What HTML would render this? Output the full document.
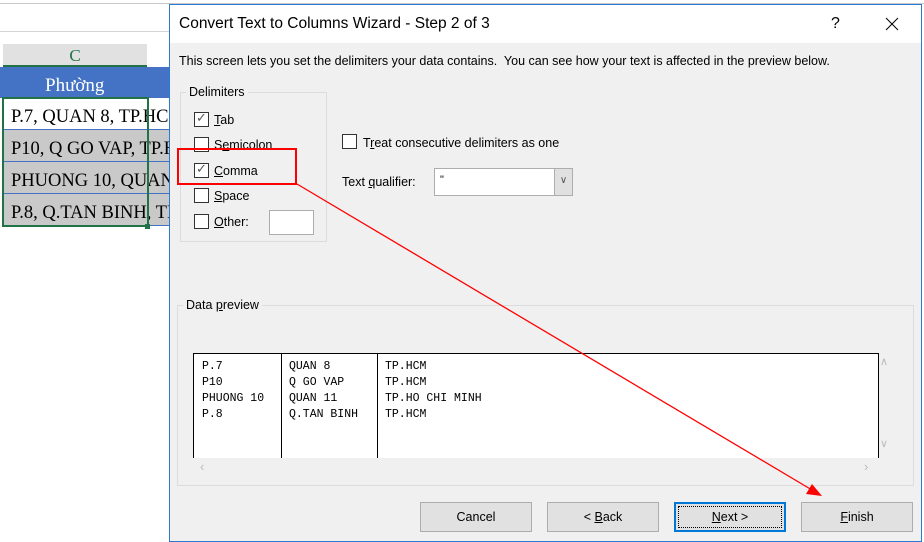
<!DOCTYPE html>
<html><head><style>
*{margin:0;padding:0;box-sizing:border-box}
body{width:924px;height:542px;position:relative;background:#fff;overflow:hidden;font-family:"Liberation Sans",sans-serif}
.a{position:absolute}
.ui{font-size:12.5px;color:#000}
.cell{position:absolute;left:2px;width:168px;height:32px;font-family:"Liberation Serif",serif;font-size:18.5px;padding:9px 0 0 9px;border-bottom:1px solid #4472c4;white-space:nowrap;overflow:hidden}
.cb{position:absolute;width:15px;height:15px;border:1px solid #333;background:#fff}
.btn{position:absolute;top:502px;width:112px;height:30px;background:#e1e1e1;border:1px solid #adadad;font-size:12.5px;text-align:center;line-height:28px}
pre{font-family:"Liberation Mono",monospace;font-size:11.5px;line-height:16px}
</style></head><body>
<div class="a" style="left:0;top:3px;width:924px;height:1px;background:#c8c8c8"></div>
<div class="a" style="left:0;top:31px;width:170px;height:1px;background:#d4d4d4"></div>
<div class="a" style="left:3px;top:44px;width:144px;height:23px;background:#e1e1e1;border-bottom:2px solid #217346;color:#217346;font-family:'Liberation Serif',serif;font-size:17px;text-align:center;line-height:24px">C</div>
<div class="a" style="left:0;top:67px;width:170px;height:31px;background:#4472c4;color:#fff;font-family:'Liberation Serif',serif;font-size:19px;padding:8px 0 0 45px">Phường</div>
<div class="cell" style="top:98px;background:#fff">P.7, QUAN 8, TP.HCM</div>
<div class="cell" style="top:130px;background:#c9c9c9">P10, Q GO VAP, TP.HCM</div>
<div class="cell" style="top:162px;background:#c9c9c9">PHUONG 10, QUAN 11</div>
<div class="cell" style="top:194px;background:#c9c9c9">P.8, Q.TAN BINH, TP</div>
<div class="a" style="left:2px;top:97px;width:147px;height:130px;border:2px solid #217346"></div>
<div class="a" style="left:145px;top:224px;width:5px;height:5px;background:#217346"></div>

<div class="a" style="left:169px;top:4px;width:753px;height:538px;background:#f0f0f0;border:1px solid #2b79d0">
 <div class="a" style="left:0;top:0;width:751px;height:38px;background:#fff"></div>
 <div class="a" style="left:9px;top:10px;font-size:15.5px">Convert Text to Columns Wizard - Step 2 of 3</div>
 <div class="a" style="left:661px;top:10px;font-size:16px">?</div>
 <svg class="a" style="left:715px;top:12px" width="14" height="14"><path d="M1 1L13 13M13 1L1 13" stroke="#000" stroke-width="1"/></svg>
 <div class="a ui" style="left:9px;top:49px">This screen lets you set the delimiters your data contains.&nbsp; You can see how your text is affected in the preview below.</div>
 <div class="a" style="left:10px;top:87px;width:147px;height:150px;border:1px solid #dcdcdc"></div>
 <div class="a ui" style="left:16px;top:80px;background:#f0f0f0;padding:0 3px">Delimiters</div>
 <div class="cb" style="left:24px;top:107px"><span style="position:absolute;left:1px;top:-3px;font-size:13px;color:#555">✓</span></div><div class="a ui" style="left:44px;top:108px"><u>T</u>ab</div>
 <div class="cb" style="left:24px;top:132px"></div><div class="a ui" style="left:44px;top:133px">S<u>e</u>micolon</div>
 <div class="cb" style="left:24px;top:158px"><span style="position:absolute;left:1px;top:-3px;font-size:13px;color:#555">✓</span></div><div class="a ui" style="left:44px;top:159px"><u>C</u>omma</div>
 <div class="cb" style="left:24px;top:183px"></div><div class="a ui" style="left:44px;top:184px"><u>S</u>pace</div>
 <div class="cb" style="left:24px;top:209px"></div><div class="a ui" style="left:44px;top:210px"><u>O</u>ther:</div>
 <div class="a" style="left:99px;top:205px;width:45px;height:25px;background:#fff;border:1px solid #adadad"></div>
 <div class="cb" style="left:172px;top:129px"></div><div class="a ui" style="left:193px;top:131px">T<u>r</u>eat consecutive delimiters as one</div>
 <div class="a ui" style="left:172px;top:170px">Text <u>q</u>ualifier:</div>
 <div class="a" style="left:264px;top:163px;width:139px;height:28px;background:#fff;border:1px solid #adadad"><span style="position:absolute;left:5px;top:5px;font-size:11px">"</span><div style="position:absolute;right:0;top:0;width:18px;height:26px;background:#e0e0e0;border-left:1px solid #adadad;font-size:10px;color:#555;text-align:center;line-height:24px">&#8744;</div></div>
 <div class="a" style="left:7px;top:300px;width:737px;height:181px;border:1px solid #dcdcdc"></div>
 <div class="a ui" style="left:13px;top:293px;background:#f0f0f0;padding:0 3px">Data <u>p</u>review</div>
 <div class="a" style="left:23px;top:348px;width:686px;height:105px;background:#fff;border-top:1px solid #000;border-left:1px solid #000;border-right:1px solid #000"></div>
 <div class="a" style="left:111px;top:348px;width:1px;height:105px;background:#000"></div>
 <div class="a" style="left:207px;top:348px;width:1px;height:105px;background:#000"></div>
 <pre class="a" style="left:32px;top:354px">P.7
P10
PHUONG 10
P.8</pre>
 <pre class="a" style="left:119px;top:354px">QUAN 8
Q GO VAP
QUAN 11
Q.TAN BINH</pre>
 <pre class="a" style="left:215px;top:354px">TP.HCM
TP.HCM
TP.HO CHI MINH
TP.HCM</pre>
 <div class="a" style="left:710px;top:350px;font-size:11px;color:#bbb">&#8743;</div>
 <div class="a" style="left:710px;top:432px;font-size:11px;color:#bbb">&#8744;</div>
 <div class="a" style="left:30px;top:454px;font-size:13px;color:#bbb">‹</div>
 <div class="a" style="left:694px;top:454px;font-size:13px;color:#bbb">›</div>
</div>
<div class="btn" style="left:420px">Cancel</div>
<div class="btn" style="left:547px">&lt; <u>B</u>ack</div>
<div class="btn" style="left:674px;border:2px solid #0078d7;line-height:26px"><span style="display:block;margin:2px;border:1px dotted #000;height:22px;line-height:20px"><u>N</u>ext &gt;</span></div>
<div class="btn" style="left:801px"><u>F</u>inish</div>

<div class="a" style="left:177px;top:148px;width:120px;height:37px;border:2px solid #f00"></div>
<svg class="a" style="left:0;top:0" width="924" height="542"><line x1="297" y1="184" x2="812" y2="490" stroke="#f00" stroke-width="1.3"/><polygon points="822,496 806,494 812,484" fill="#f00"/></svg>
</body></html>
